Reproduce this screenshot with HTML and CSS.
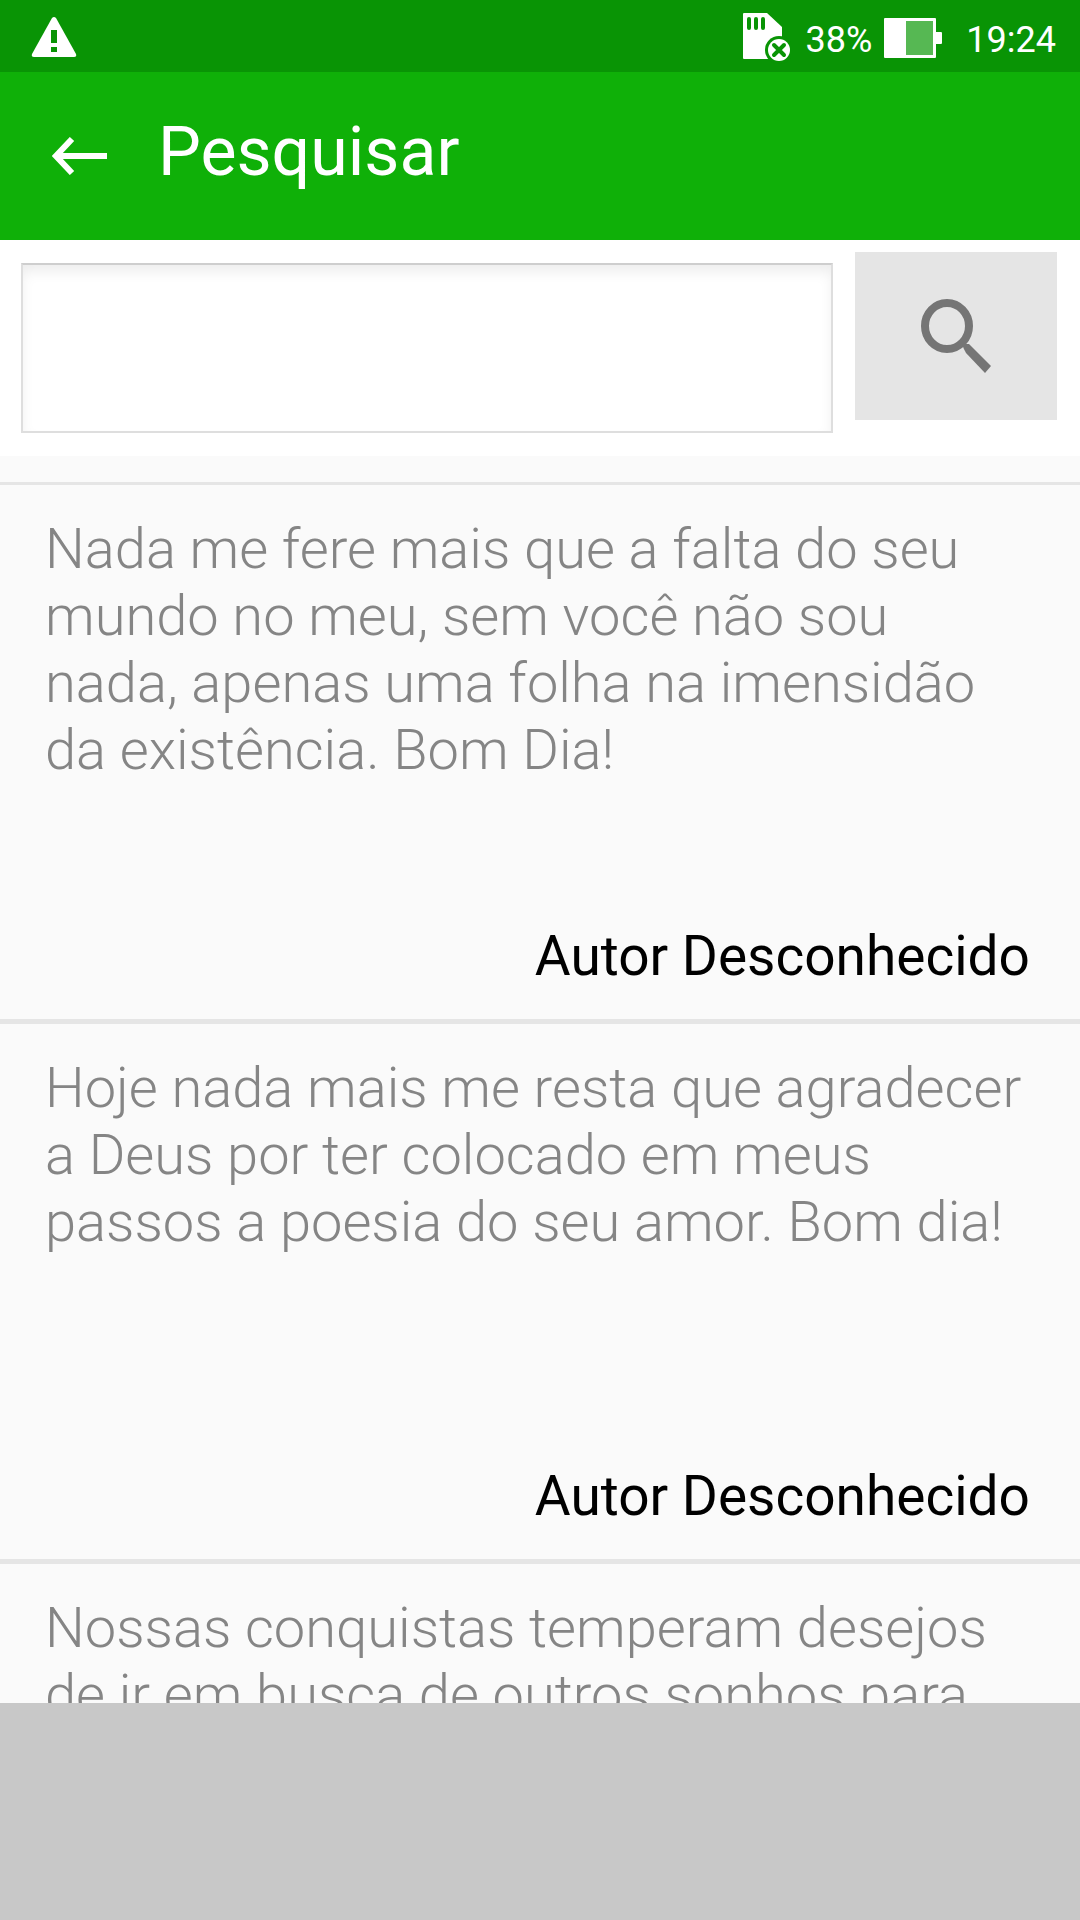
FILE: index.html
```html
<!DOCTYPE html>
<html lang="pt-BR">
<head>
    <meta charset="utf-8">
    <meta name="viewport" content="width=device-width, initial-scale=1">
    <title>Pesquisar</title>
    <link rel="stylesheet" href="styles.css">
</head>
<body>
    <div class="status-bar">
        <svg class="status-icon" width="46" height="72" viewBox="0 0 46 72" aria-hidden="true">
            <path d="M21 18Q23 16 25 18L45 54Q46 57 43 57H3Q0 57 1 54Z" fill="#fff"/>
            <path d="M20 30h6v13h-6zM20 47h6v5h-6z" fill="#099405"/>
        </svg>
        <div class="status-right">
            <svg class="status-icon" width="48" height="72" viewBox="0 0 48 72" aria-hidden="true">
                <path d="M1 13h23l15 14v32H1Q0 59 0 58V14Q0 13 1 13z" fill="#fff"/>
                <path d="M6 19v9M13 19v9M20 19v9" stroke="#099405" stroke-width="4" stroke-linecap="round"/>
                <circle cx="36" cy="50" r="14" fill="#099405"/>
                <circle cx="36" cy="50" r="11" fill="#fff"/>
                <path d="M31 45l10 10M41 45l-10 10" stroke="#099405" stroke-width="4" stroke-linecap="round"/>
            </svg>
            <span class="battery-level">38%</span>
            <svg class="status-icon" width="58" height="72" viewBox="0 0 58 72" aria-hidden="true">
                <path d="M1 18h50q1 0 1 1v13h5q1 0 1 1v10q0 1-1 1h-5v13q0 1-1 1H1q-1 0-1-1V19q0-1 1-1z" fill="#fff"/>
                <path d="M22 21h27v34H22z" fill="#56b853"/>
            </svg>
            <span class="clock">19:24</span>
        </div>
    </div>

    <header class="toolbar">
        <a class="back" href="#" aria-label="Voltar">
            <svg width="56" height="38" viewBox="0 0 56 38" aria-hidden="true">
                <path d="M20 2L4 19L20 36M4 19H55" fill="none" stroke="#fff" stroke-width="6"/>
            </svg>
        </a>
        <h1 class="title">Pesquisar</h1>
    </header>

    <form class="search">
        <input class="search-input" type="text" aria-label="Pesquisar">
        <button class="search-button" type="submit" aria-label="Buscar">
            <svg width="70" height="76" viewBox="0 0 70 76" aria-hidden="true">
                <ellipse cx="26" cy="28" rx="22" ry="23" fill="none" stroke="#757575" stroke-width="8"/>
                <path d="M41 46h7l22 22-6 7-19-20q-2-3-4-9z" fill="#757575"/>
            </svg>
        </button>
    </form>

    <main class="list">
        <article class="item">
            <p class="quote">Nada me fere mais que a falta do seu mundo no meu, sem você não sou nada, apenas uma folha na imensidão da existência. Bom Dia!</p>
            <p class="author">Autor Desconhecido</p>
        </article>
        <article class="item">
            <p class="quote">Hoje nada mais me resta que agradecer a Deus por ter colocado em meus passos a poesia do seu amor. Bom dia!</p>
            <p class="author">Autor Desconhecido</p>
        </article>
        <article class="item">
            <p class="quote">Nossas conquistas temperam desejos de ir em busca de outros sonhos para</p>
        </article>
    </main>

    <footer class="ad-space"></footer>
</body>
</html>
```
FILE: styles.css
```css
* {
    box-sizing: border-box;
}
body {
    margin: 0;
    height: 100vh;
    display: flex;
    flex-direction: column;
    overflow: hidden;
    background-color: #fafafa;
    font-family: Roboto, sans-serif;
}
h1, p {
    margin: 0;
}

/* Status bar */
.status-bar {
    flex: none;
    display: flex;
    justify-content: space-between;
    padding: 0 24px 0 31px;
    background-color: #099405;
    color: #fff;
    font-size: 36px;
    line-height: 80px;
    height: 72px;
}
.status-icon {
    display: block;
    flex: none;
}
.status-right {
    display: flex;
}
.battery-level {
    margin: 0 12px 0 15px;
}
.clock {
    margin-left: 24px;
}

/* Toolbar */
.toolbar {
    flex: none;
    display: flex;
    align-items: center;
    gap: 50px;
    height: 168px;
    padding: 0 52px;
    background-color: #0fb008;
    color: #fff;
}
.back {
    display: flex;
}
.title {
    padding-bottom: 8px;
    font-size: 68px;
    font-weight: 400;
    line-height: 80px;
}

/* Search */
.search {
    flex: none;
    display: flex;
    align-items: flex-start;
    gap: 22px;
    padding: 12px 23px 23px 21px;
    background-color: #fff;
}
.search-input {
    flex: 1;
    min-width: 0;
    height: 170px;
    margin-top: 11px;
    padding: 0 24px;
    border: 2px solid #dedede;
    border-top-color: #cecece;
    background-color: #fff;
    box-shadow: inset 0 8px 14px -2px #ececec;
    font: 300 56px Roboto, sans-serif;
    outline: none;
}
.search-button {
    display: flex;
    align-items: center;
    justify-content: center;
    width: 202px;
    height: 168px;
    padding: 0;
    border: 0;
    background-color: #e5e5e5;
}

/* Quotes */
.list {
    flex: 1;
    min-height: 0;
    overflow: hidden;
    padding-top: 26px;
}
.item {
    display: flex;
    flex-direction: column;
    justify-content: space-between;
    min-height: 540px;
    padding: 31px 50px 31px 45px;
    border-bottom: 5px solid #e5e5e5;
}
.item:first-child {
    min-height: 542px;
    border-top: 3px solid #e5e5e5;
}
.quote {
    color: #858585;
    font-size: 56px;
    font-weight: 300;
    line-height: 67px;
}
.author {
    color: #000;
    font-size: 55px;
    line-height: 64px;
    text-align: right;
}

.ad-space {
    flex: none;
    height: 217px;
    background-color: #c8c8c8;
}
```
